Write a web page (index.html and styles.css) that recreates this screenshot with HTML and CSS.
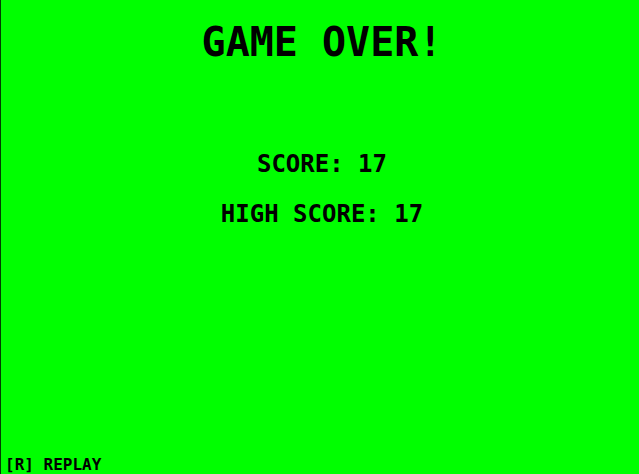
FILE: index.html
```html
<!DOCTYPE html>
<html lang="en">

<head>
  <meta charset="UTF-8" />
  <meta name="viewport" content="width=device-width, initial-scale=1.0" />
  <title>Game Over</title>
  <link rel="stylesheet" href="styles.css">
</head>

<body>
  <main class="screen">
    <h1 class="title">GAME OVER!</h1>
    <div class="scores">
      <p>SCORE: 17</p>
      <p>HIGH SCORE: 17</p>
    </div>
    <button class="replay" type="button">[R] REPLAY</button>
  </main>
</body>

</html>
```

FILE: styles.css
```css
body {
  margin: 0;
  background-color: #00ff00;
  color: black;
  font-family: "DejaVu Sans Mono", monospace;
  font-weight: bold;
}

.screen {
  box-sizing: border-box;
  min-height: 100vh;
  display: flex;
  flex-direction: column;
  align-items: center;
  border-left: 1px solid #003c00;
  padding-top: 18px;
  padding-left: 4px;
}

.title {
  margin: 0;
  font-size: 40px;
  line-height: 48px;
}

.scores {
  display: flex;
  flex-direction: column;
  align-items: center;
  gap: 20px;
  margin-top: 83px;
  font-size: 24px;
  line-height: 30px;
}

.scores p {
  margin: 0;
}

.replay {
  align-self: flex-start;
  margin-top: auto;
  border: 0;
  padding: 0;
  background: none;
  color: inherit;
  font: inherit;
  font-size: 16px;
  line-height: 18px;
  cursor: pointer;
}
```
